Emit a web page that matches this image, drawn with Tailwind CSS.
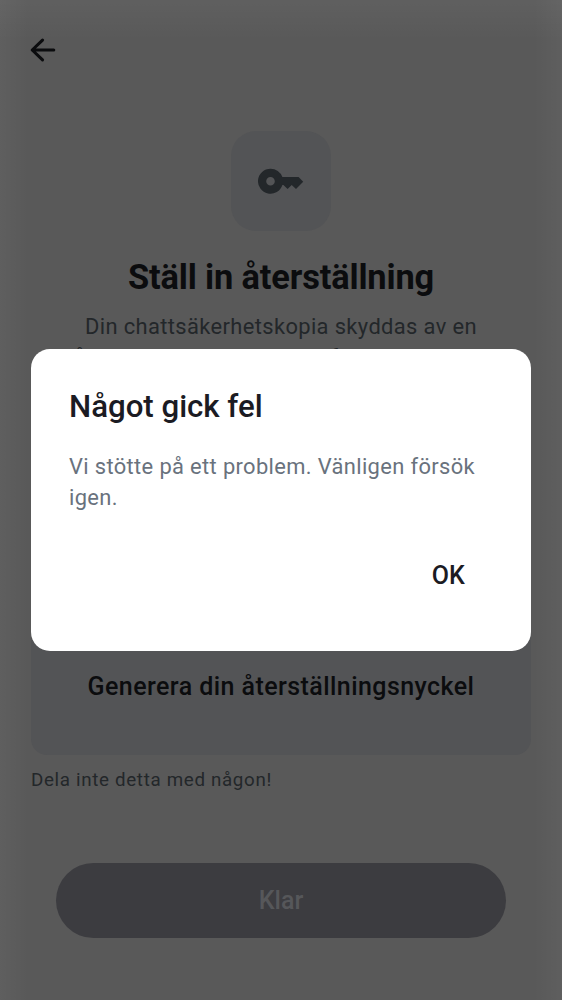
<!DOCTYPE html>
<html lang="sv"><head><meta charset="utf-8"><meta name="viewport" content="width=device-width"><title>Ställ in återställning</title>
<script src="https://cdn.jsdelivr.net/npm/@tailwindcss/browser@4"></script></head>
<body class="bg-[#595959] font-[Roboto,sans-serif]">
<div class="relative h-[1000px] w-[562px] overflow-hidden">
<main class="flex h-full flex-col bg-[linear-gradient(to_bottom,rgba(255,255,255,0.04),transparent_40px),linear-gradient(to_right,rgba(255,255,255,0.035),transparent_28px,transparent_534px,rgba(255,255,255,0.035))] px-[31px] pt-[31px]">
<button class="size-[38px] -ml-[7px]" aria-label="Tillbaka"><svg viewBox="0 0 24 24" class="size-[38px]" fill="none" stroke="#0b0c0e" stroke-width="1.95" stroke-linecap="round" stroke-linejoin="round"><path d="M18.8 12H5.2M11.7 5.8L5.2 12l6.5 6.2"/></svg></button>
<div class="mx-auto mt-[62px] flex size-[100px] shrink-0 items-center justify-center rounded-[25px] bg-[#535456]"><svg width="46" height="26" viewBox="0 0 46 26"><path fill="#23272a" fill-rule="evenodd" d="M12.5 .7A12.5 12.5 0 1 0 24.4 17h1l4.2 4 4.1-3.9 4.3 3.9 7.2-7.3-4.6-4.7H24.4A12.5 12.5 0 0 0 12.5 .7Zm0 8.2a4.3 4.3 0 1 1 0 8.6 4.3 4.3 0 0 1 0-8.6Z"/></svg></div>
<h1 class="mt-[26px] text-center text-[34.4px] leading-[41px] font-bold tracking-[-0.14px] whitespace-nowrap text-[#0b0c0e]">Ställ in återställning</h1>
<p class="mt-[13px] h-[62px] text-center text-[21.9px] leading-[31px] tracking-[0.37px] whitespace-nowrap text-[#23272a]">Din chattsäkerhetskopia skyddas av en<br>återställningsnyckel som förblir din egen.</p>
<section class="mt-[81px] flex h-[300.5px] shrink-0 items-end justify-center rounded-[16px] bg-[#535456] pb-[51.5px]"><span class="text-[25px] leading-[32px] font-medium tracking-[0.43px] whitespace-nowrap text-[#0b0c0e]">Generera din återställningsnyckel</span></section>
<p class="mt-[13.5px] text-[18.75px] leading-[25px] tracking-[0.67px] text-[#23272a]">Dela inte detta med någon!</p>
<button class="mx-[25px] mt-[69.5px] h-[75px] shrink-0 rounded-full bg-[#3c3c40] pt-px text-[25px] font-medium text-[#56575a]">Klar</button>
</main>
<div role="dialog" class="absolute top-[349px] left-[31px] flex h-[301.5px] w-[500px] flex-col rounded-[19px] bg-white px-[38px] pt-[39px]">
<h2 class="text-[31.25px] leading-[38px] font-medium tracking-[-0.03px] text-[#1b1b23]">Något gick fel</h2>
<p class="mt-[25px] text-[21.9px] leading-[31px] tracking-[0.36px] text-[#69727d]">Vi stötte på ett problem. Vänligen försök<br>igen.</p>
<button class="mt-[47px] mr-[28px] self-end text-[25px] leading-[32px] font-medium tracking-[0.15px] text-[#1b1b23]">OK</button>
</div>
</div>
</body></html>
